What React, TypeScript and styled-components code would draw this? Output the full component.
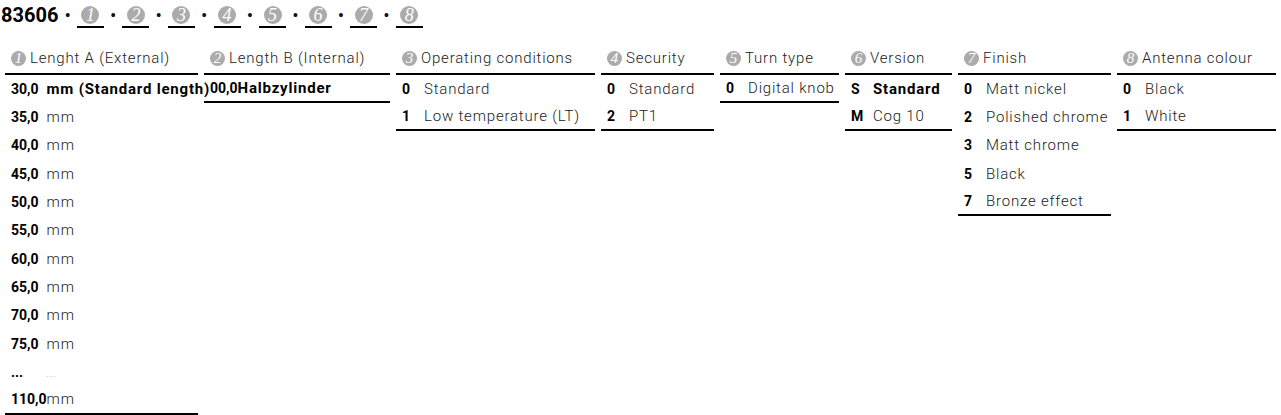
import React from 'react';
import styled, { createGlobalStyle } from 'styled-components';

const GlobalStyle = createGlobalStyle`
  html, body {
    margin: 0;
    padding: 0;
    background: #fff;
  }
  body {
    font-family: Roboto, "Liberation Sans", sans-serif;
    color: #111;
  }
`;

interface Row {
  code: string;
  label: string;
  strong?: boolean;
  muted?: boolean;
}

interface Column {
  title: string;
  width: number;
  rows: Row[];
}

const mmRows: Row[] = ['35,0', '40,0', '45,0', '50,0', '55,0', '60,0', '65,0', '70,0', '75,0'].map(
  (code) => ({ code, label: 'mm' })
);

const columns: Column[] = [
  {
    title: 'Lenght A (External)',
    width: 193,
    rows: [
      { code: '30,0', label: 'mm (Standard length)', strong: true },
      ...mmRows,
      { code: '...', label: '...', muted: true },
      { code: '110,0', label: 'mm' },
    ],
  },
  { title: 'Length B (Internal)', width: 186, rows: [{ code: '00,0', label: 'Halbzylinder', strong: true }] },
  {
    title: 'Operating conditions',
    width: 199,
    rows: [
      { code: '0', label: 'Standard' },
      { code: '1', label: 'Low temperature (LT)' },
    ],
  },
  {
    title: 'Security',
    width: 113,
    rows: [
      { code: '0', label: 'Standard' },
      { code: '2', label: 'PT1' },
    ],
  },
  { title: 'Turn type', width: 119, rows: [{ code: '0', label: 'Digital knob' }] },
  {
    title: 'Version',
    width: 107,
    rows: [
      { code: 'S', label: 'Standard', strong: true },
      { code: 'M', label: 'Cog 10' },
    ],
  },
  {
    title: 'Finish',
    width: 153,
    rows: [
      { code: '0', label: 'Matt nickel' },
      { code: '2', label: 'Polished chrome' },
      { code: '3', label: 'Matt chrome' },
      { code: '5', label: 'Black' },
      { code: '7', label: 'Bronze effect' },
    ],
  },
  {
    title: 'Antenna colour',
    width: 159,
    rows: [
      { code: '0', label: 'Black' },
      { code: '1', label: 'White' },
    ],
  },
];

const Page = styled.div`
  padding-left: 1px;
`;

const Title = styled.div`
  display: flex;
  align-items: center;
  gap: 6.4px;
  height: 30px;
`;

const ArticleNo = styled.span`
  font-size: 20px;
  font-weight: 700;
  color: #000;
`;

const Dot = styled.span`
  font-size: 16px;
  font-weight: 700;
`;

const Slot = styled.span`
  display: inline-flex;
  justify-content: center;
  width: 27px;
  padding-bottom: 2px;
  border-bottom: 2px solid #000;
  margin-top: 3px;
`;

const Badge = styled.span<{ size: number }>`
  display: inline-flex;
  align-items: center;
  justify-content: center;
  width: ${(p) => p.size}px;
  height: ${(p) => p.size}px;
  border-radius: 50%;
  background: #ababab;
  color: #fff;
  font-family: "Liberation Serif", serif;
  font-style: italic;
  font-size: ${(p) => p.size}px;
  line-height: 1;
  letter-spacing: 0;
  flex-shrink: 0;
`;

const Columns = styled.div`
  display: flex;
  align-items: flex-start;
  gap: 6px;
  margin-top: 16px;
  padding-left: 4px;
`;

const Block = styled.div<{ width: number }>`
  display: grid;
  grid-template-columns: minmax(28px, max-content) minmax(0, 1fr);
  grid-auto-rows: 28.36px;
  width: ${(p) => p.width}px;
  font-size: 15px;
`;

const Head = styled.div`
  grid-column: 1 / -1;
  display: flex;
  align-items: center;
  gap: 4px;
  height: 29px;
  box-sizing: border-box;
  padding: 0 0 3px 6px;
  border-bottom: 2px solid #000;
  font-weight: 300;
  letter-spacing: 0.8px;
  white-space: nowrap;
  color: #222;
`;

const Code = styled.div<{ last: boolean }>`
  display: flex;
  align-items: center;
  padding-left: 6px;
  font-size: 14px;
  font-weight: 700;
  white-space: nowrap;
  color: #000;
  border-bottom: ${(p) => (p.last ? '2px solid #000' : 'none')};
`;

const Label = styled.div<{ last: boolean; strong?: boolean; muted?: boolean }>`
  display: flex;
  align-items: ${(p) => (p.muted ? 'flex-end' : 'center')};
  padding-bottom: ${(p) => (p.muted ? '7px' : '0')};
  box-sizing: border-box;
  white-space: nowrap;
  overflow: visible;
  letter-spacing: ${(p) => (p.muted ? '1px' : '0.8px')};
  font-weight: ${(p) => (p.strong ? 700 : 300)};
  font-size: ${(p) => (p.muted ? '10px' : '15px')};
  color: ${(p) => (p.muted ? '#999' : p.strong ? '#000' : '#222')};
  border-bottom: ${(p) => (p.last ? '2px solid #000' : 'none')};
`;

export default function App() {
  return (
    <Page>
      <GlobalStyle />
      <Title>
        <ArticleNo>83606</ArticleNo>
        {columns.map((_, i) => (
          <React.Fragment key={i}>
            <Dot>•</Dot>
            <Slot>
              <Badge size={18}>{i + 1}</Badge>
            </Slot>
          </React.Fragment>
        ))}
      </Title>
      <Columns>
        {columns.map((col, i) => (
          <Block key={col.title} width={col.width}>
            <Head>
              <Badge size={15}>{i + 1}</Badge>
              {col.title}
            </Head>
            {col.rows.map((row, r) => {
              const last = r === col.rows.length - 1;
              return (
                <React.Fragment key={r}>
                  <Code last={last}>{row.code}</Code>
                  <Label last={last} strong={row.strong} muted={row.muted}>
                    {row.label}
                  </Label>
                </React.Fragment>
              );
            })}
          </Block>
        ))}
      </Columns>
    </Page>
  );
}
